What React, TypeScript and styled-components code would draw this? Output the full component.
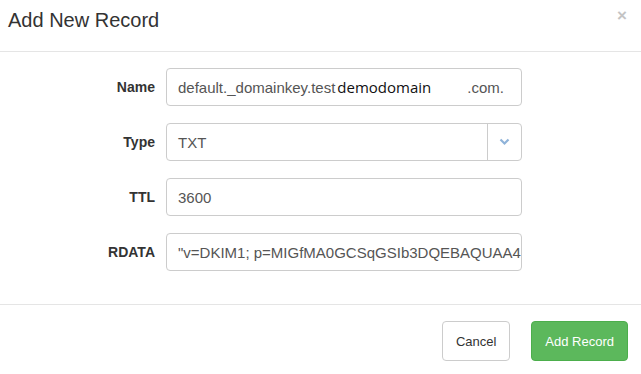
import React from 'react';
import styled, { createGlobalStyle } from 'styled-components';

const GlobalStyle = createGlobalStyle`
  html, body {
    margin: 0;
    padding: 0;
    background: #fff;
    font-family: "Liberation Sans", Arial, sans-serif;
    color: #333;
  }
`;

const Modal = styled.div`
  width: 641px;
  height: 374px;
  display: flex;
  flex-direction: column;
  background: #fff;
`;

const Header = styled.div`
  height: 52px;
  box-sizing: border-box;
  border-bottom: 1px solid #e5e5e5;
  display: flex;
  align-items: flex-start;
  justify-content: space-between;
  padding: 8px 14px 0 8px;
`;

const Title = styled.h4`
  margin: 0;
  font-size: 20px;
  font-weight: normal;
  color: #333;
  line-height: 24px;
`;

const Close = styled.span`
  font-size: 17px;
  font-weight: bold;
  color: #c4c4c4;
  line-height: 16px;
`;

const Body = styled.form`
  display: flex;
  flex-direction: column;
  gap: 17px;
  padding: 16px 0 0 0;
  height: 253px;
  box-sizing: border-box;
  border-bottom: 1px solid #e5e5e5;
`;

const Row = styled.div`
  display: grid;
  grid-template-columns: 155px 356px;
  column-gap: 11px;
  align-items: center;
`;

const Label = styled.label`
  text-align: right;
  font-weight: bold;
  font-size: 14px;
  color: #333;
`;

const Field = styled.div`
  height: 38px;
  box-sizing: border-box;
  border: 1px solid #ccc;
  border-radius: 4px;
  display: flex;
  align-items: center;
  padding: 0 11px;
  font-size: 15px;
  color: #555;
  white-space: nowrap;
  overflow: hidden;
`;

const Pasted = styled.span<{ $gap?: number }>`
  color: #111;
  font-family: "Open Sans", "Liberation Sans", sans-serif;
  font-size: 15px;
  margin-left: 2px;
  margin-right: ${({ $gap }) => $gap ?? 0}px;
`;

const SelectField = styled(Field)`
  padding-right: 0;
  justify-content: space-between;
`;

const Caret = styled.span`
  width: 33px;
  height: 100%;
  border-left: 1px solid #ccc;
  display: flex;
  align-items: center;
  justify-content: center;
`;

const Footer = styled.div`
  display: flex;
  justify-content: flex-end;
  gap: 21px;
  padding: 16px 13px 0 0;
`;

const Button = styled.button<{ $primary?: boolean }>`
  height: 40px;
  box-sizing: border-box;
  border-radius: 4px;
  font-family: "Liberation Sans", Arial, sans-serif;
  font-size: 13px;
  padding: 0 13px;
  border: 1px solid ${({ $primary }) => ($primary ? '#4cae4c' : '#ccc')};
  background: ${({ $primary }) => ($primary ? '#5cb85c' : '#fff')};
  color: ${({ $primary }) => ($primary ? '#fff' : '#333')};
`;

export default function App() {
  return (
    <>
      <GlobalStyle />
      <Modal>
        <Header>
          <Title>Add New Record</Title>
          <Close>×</Close>
        </Header>
        <Body>
          <Row>
            <Label>Name</Label>
            <Field>
              default._domainkey.test<Pasted $gap={36}>demodomain</Pasted>.com.
            </Field>
          </Row>
          <Row>
            <Label>Type</Label>
            <SelectField>
              TXT
              <Caret>
                <svg width="11" height="8" viewBox="0 0 11 8">
                  <path d="M1.5 1.5 L5.5 5.5 L9.5 1.5" fill="none" stroke="#8fb3d9" strokeWidth="2.2" />
                </svg>
              </Caret>
            </SelectField>
          </Row>
          <Row>
            <Label>TTL</Label>
            <Field>3600</Field>
          </Row>
          <Row>
            <Label>RDATA</Label>
            <Field>"v=DKIM1; p=MIGfMA0GCSqGSIb3DQEBAQUAA4GNADCBiQKBgQ</Field>
          </Row>
        </Body>
        <Footer>
          <Button>Cancel</Button>
          <Button $primary>Add Record</Button>
        </Footer>
      </Modal>
    </>
  );
}
